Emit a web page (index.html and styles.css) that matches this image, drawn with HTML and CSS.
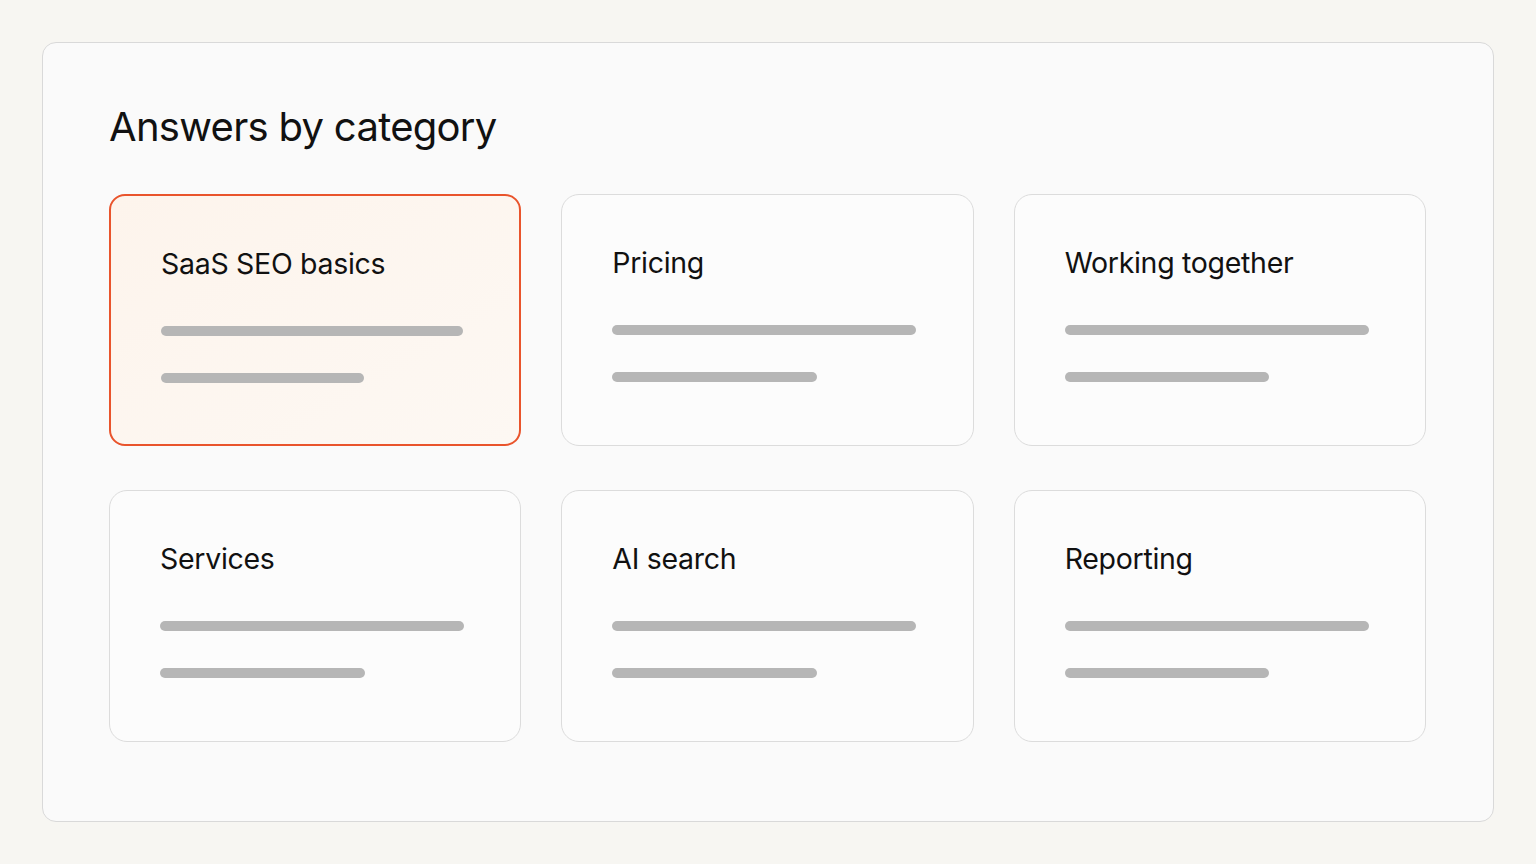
FILE: index.html
```html
<!DOCTYPE html>
<html lang="en">

<head>
    <meta charset="UTF-8">
    <meta name="viewport" content="width=device-width, initial-scale=1.0">
    <title>Answers by category</title>
    <link rel="stylesheet" href="styles.css">
</head>

<body>
    <div class="panel">
        <h1 class="header">Answers by category</h1>
        <div class="categories">
            <div class="category active">
                <h2 class="category-title">SaaS SEO basics</h2>
                <div class="bar bar-long"></div>
                <div class="bar bar-short"></div>
            </div>
            <div class="category">
                <h2 class="category-title">Pricing</h2>
                <div class="bar bar-long"></div>
                <div class="bar bar-short"></div>
            </div>
            <div class="category">
                <h2 class="category-title">Working together</h2>
                <div class="bar bar-long"></div>
                <div class="bar bar-short"></div>
            </div>
            <div class="category">
                <h2 class="category-title">Services</h2>
                <div class="bar bar-long"></div>
                <div class="bar bar-short"></div>
            </div>
            <div class="category">
                <h2 class="category-title">AI search</h2>
                <div class="bar bar-long"></div>
                <div class="bar bar-short"></div>
            </div>
            <div class="category">
                <h2 class="category-title">Reporting</h2>
                <div class="bar bar-long"></div>
                <div class="bar bar-short"></div>
            </div>
        </div>
    </div>
</body>

</html>
```

FILE: styles.css
```css
body {
    background-color: #f7f6f2;
    margin: 0;
    padding: 42px;
    font-family: Inter, "Noto Sans", sans-serif;
    color: #111;
}

.panel {
    background-color: #fafafa;
    border: 1.5px solid #d9d9d9;
    border-radius: 14px;
    height: 780px;
    box-sizing: border-box;
    padding: 58px 67px 0 66px;
}

.header {
    font-size: 40px;
    font-weight: 400;
    letter-spacing: -0.7px;
    margin: 0 0 41px 0;
    line-height: 52px;
}

.categories {
    display: grid;
    grid-template-columns: repeat(3, 1fr);
    column-gap: 40px;
    row-gap: 44px;
}

.category {
    background-color: #fcfcfc;
    border: 1.5px solid #dcdcdc;
    border-radius: 18px;
    height: 252px;
    box-sizing: border-box;
    padding: 50px 50px 0 50px;
}

/* the selected category */
.category.active {
    background: linear-gradient(to bottom right, #fdf4ec, #fdf8f3);
    border: 2px solid #e9542c;
    border-radius: 16px;
}

.category-title {
    font-size: 28.5px;
    font-weight: 400;
    letter-spacing: -0.3px;
    margin: 0 0 44px 0;
    line-height: 36px;
}

.bar {
    background-color: #b6b6b6;
    height: 10px;
    border-radius: 5px;
}

.bar-long {
    width: 98%;
    margin-bottom: 37px;
}

.bar-short {
    width: 66%;
}
```
